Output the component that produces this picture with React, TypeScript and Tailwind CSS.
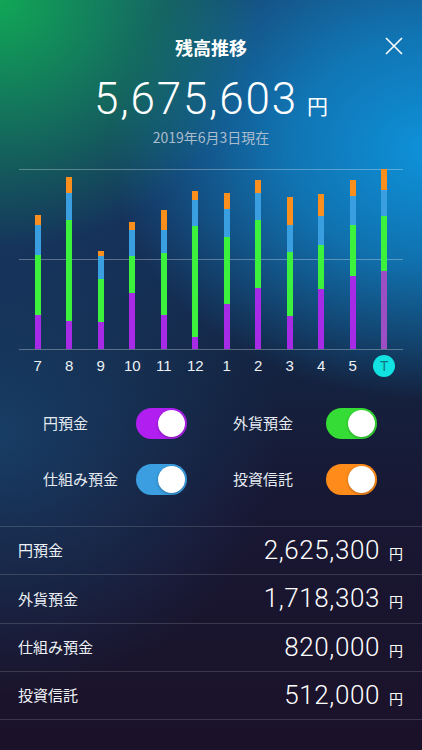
const jp = 'font-["Noto_Sans_CJK_JP",sans-serif]';

// heights measured from the chart, in thirds of a pixel: purple, green, blue, orange
const bars = [
  { label: '7', v: [102, 181, 88, 31] },
  { label: '8', v: [85, 302, 80, 48] },
  { label: '9', v: [80, 131, 67, 17] },
  { label: '10', v: [167, 113, 78, 24] },
  { label: '11', v: [102, 185, 70, 60] },
  { label: '12', v: [35, 333, 80, 26] },
  { label: '1', v: [136, 199, 85, 49] },
  { label: '2', v: [183, 204, 82, 39] },
  { label: '3', v: [98, 193, 80, 85] },
  { label: '4', v: [179, 134, 87, 65] },
  { label: '5', v: [220, 153, 87, 48] },
  { label: 'T', v: [234, 164, 80, 62], today: true },
];

const segColors = ['bg-[#a62ae6]', 'bg-[#3df23c]', 'bg-[#3a9fe0]', 'bg-[#fb8f1e]'];

const toggles = [
  { label: '円預金', color: 'bg-[#b01ff0]' },
  { label: '外貨預金', color: 'bg-[#36dc36]' },
  { label: '仕組み預金', color: 'bg-[#3a9ee0]' },
  { label: '投資信託', color: 'bg-[#ff8c1a]' },
];

const rows = [
  { label: '円預金', value: '2,625,300' },
  { label: '外貨預金', value: '1,718,303' },
  { label: '仕組み預金', value: '820,000' },
  { label: '投資信託', value: '512,000' },
];

function Toggle({ color }: { color: string }) {
  return (
    <div className={`flex h-[31px] w-[51px] items-center justify-end rounded-full p-[2px] ${color}`}>
      <div className="h-[27px] w-[27px] rounded-full bg-white shadow-[0_1px_3px_rgba(0,0,0,0.3)]" />
    </div>
  );
}

export default function App() {
  return (
    <div className="min-h-[750px] w-full overflow-hidden bg-[radial-gradient(ellipse_260px_250px_at_0%_0%,#11a655_0%,#11a65599_40%,#11a65500_100%),radial-gradient(ellipse_320px_250px_at_102%_20%,#0e92da_0%,#0e92daaa_45%,#0e92da00_100%),radial-gradient(ellipse_280px_260px_at_0%_58%,#184570cc_0%,#18457000_100%),linear-gradient(180deg,#17406c_0%,#15325c_28%,#14223f_50%,#181733_68%,#1b1229_100%)] text-white">
      {/* header */}
      <div className="grid grid-cols-[1fr_auto_1fr] items-center pt-[35px]">
        <div />
        <h1 className={`${jp} text-[18px] font-bold leading-[24px]`}>残高推移</h1>
        <div className="flex justify-end pr-[19px]">
          <svg width="18" height="18" viewBox="0 0 18 18" className="-mt-[3px]">
            <path d="M1 1L17 17M17 1L1 17" stroke="white" strokeWidth="1.6" />
          </svg>
        </div>
      </div>

      <div className="mt-[18px] flex items-baseline justify-center gap-[9px]">
        <span className="font-['Roboto',sans-serif] text-[44px] font-light leading-[44px] tracking-[1.8px]">5,675,603</span>
        <span className={`${jp} text-[21px] leading-none`}>円</span>
      </div>
      <p className={`${jp} mt-[6px] text-center text-[14px] leading-[20px] text-[#abbccd]`}>2019年6月3日現在</p>

      {/* chart */}
      <div className="mx-[19px] mt-[22px] grid">
        <div className="col-start-1 row-start-1 flex h-[181px] flex-col justify-between">
          <div className="h-px bg-white/30" />
          <div className="h-px bg-white/30" />
          <div className="h-px bg-white/30" />
        </div>
        <div className="col-start-1 row-start-1 flex h-[180px] items-end px-[3px]">
          {bars.map((b) => (
            <div key={b.label} className="flex flex-1 justify-center">
              <div className="flex w-[6px] flex-col-reverse">
                {b.v.map((h, i) => (
                  <div
                    key={i}
                    className={i === 0 && b.today ? 'bg-[#9c4fc2]' : segColors[i]}
                    style={{ height: h / 3 }}
                  />
                ))}
              </div>
            </div>
          ))}
        </div>
      </div>
      <div className="mx-[22px] flex h-[32px] items-center">
        {bars.map((b) => (
          <div key={b.label} className="flex flex-1 justify-center font-['Liberation_Sans',sans-serif] text-[15px] text-[#eef2f6]">
            {b.today ? (
              <span className="flex h-[22px] w-[22px] items-center justify-center rounded-full bg-[#12e2e2] text-[14px] text-[#0b7880]">T</span>
            ) : (
              b.label
            )}
          </div>
        ))}
      </div>

      {/* toggles */}
      <div className="mt-[26px] grid grid-cols-[190px_190px] gap-y-[25px] pl-[43px]">
        {toggles.map((t) => (
          <div key={t.label} className="flex h-[31px] items-center">
            <span className={`${jp} w-[93px] text-[15px] text-[#e6ebf1]`}>{t.label}</span>
            <Toggle color={t.color} />
          </div>
        ))}
      </div>

      {/* breakdown */}
      <div className="mt-[31px] border-t border-white/15">
        {rows.map((r) => (
          <div key={r.label} className="flex h-[48.3px] items-center justify-between border-b border-white/15 pl-[18px] pr-[19px]">
            <span className={`${jp} text-[15px] text-[#eef2f6]`}>{r.label}</span>
            <div className="flex items-baseline gap-[9px]">
              <span className="font-['Roboto',sans-serif] text-[26px] font-light tracking-[0.6px]">{r.value}</span>
              <span className={`${jp} text-[14px]`}>円</span>
            </div>
          </div>
        ))}
      </div>
    </div>
  );
}
